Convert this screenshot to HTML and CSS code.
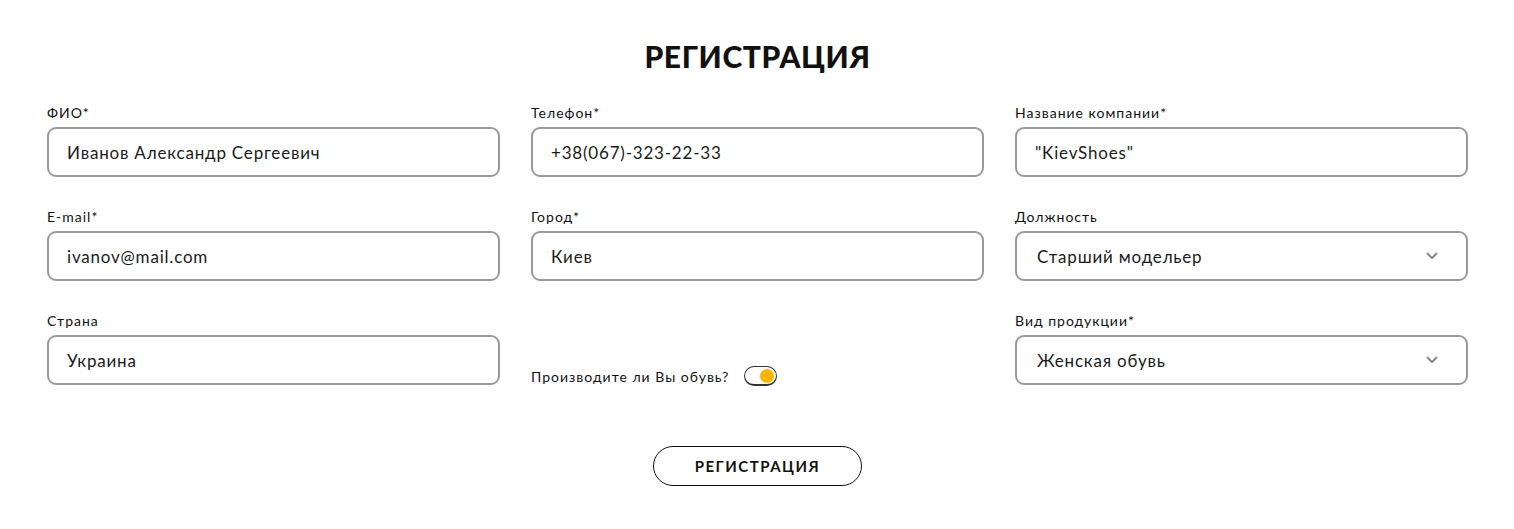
FILE: index.html
```html
<!DOCTYPE html>
<html lang="ru">

<head>
  <meta charset="UTF-8">
  <meta name="viewport" content="width=device-width, initial-scale=1.0">
  <title>Регистрация</title>

  <link rel="stylesheet" href="styles.css">

</head>

<body>

  <section class="reg">
    <h1 class="reg-title">РЕГИСТРАЦИЯ</h1>

    <form class="reg-form">
      <div class="field">
        <label>ФИО*</label>
        <div class="box">Иванов Александр Сергеевич</div>
      </div>
      <div class="field">
        <label>Телефон*</label>
        <div class="box">+38(067)-323-22-33</div>
      </div>
      <div class="field">
        <label>Название компании*</label>
        <div class="box">"KievShoes"</div>
      </div>

      <div class="field">
        <label>E-mail*</label>
        <div class="box">ivanov@mail.com</div>
      </div>
      <div class="field">
        <label>Город*</label>
        <div class="box">Киев</div>
      </div>
      <div class="field">
        <label>Должность</label>
        <div class="box select">
          <span>Старший модельер</span>
          <svg class="chev" width="12" height="8" viewBox="0 0 12 8"><path d="M1.5 1.5 L6 6 L10.5 1.5" fill="none" stroke="#8a8a8a" stroke-width="2" stroke-linecap="round" stroke-linejoin="round"/></svg>
        </div>
      </div>

      <div class="field">
        <label>Страна</label>
        <div class="box">Украина</div>
      </div>
      <div class="field check">
        <span>Производите ли Вы обувь?</span>
        <span class="toggle"><span class="knob"></span></span>
      </div>
      <div class="field">
        <label>Вид продукции*</label>
        <div class="box select">
          <span>Женская обувь</span>
          <svg class="chev" width="12" height="8" viewBox="0 0 12 8"><path d="M1.5 1.5 L6 6 L10.5 1.5" fill="none" stroke="#8a8a8a" stroke-width="2" stroke-linecap="round" stroke-linejoin="round"/></svg>
        </div>
      </div>
    </form>

    <div class="center">
      <button class="btn">РЕГИСТРАЦИЯ</button>
    </div>
  </section>

</body>

</html>
```

FILE: styles.css
```css
body {
  margin: 0;
  background: #fff;
  color: #111;
  font-family: "Lato", "Noto Sans", sans-serif;
  font-weight: 400;
}

.reg {
  padding: 37px 46px 0 47px;
}

.reg-title {
  margin: 0 0 30px;
  text-align: center;
  font-size: 30px;
  font-weight: 900;
  letter-spacing: 0.6px;
  line-height: 38px;
}

.reg-form {
  display: grid;
  grid-template-columns: repeat(3, 1fr);
  column-gap: 31px;
  row-gap: 32px;
}

.field {
  display: flex;
  flex-direction: column;
}

.field label {
  font-size: 14px;
  font-weight: 400;
  letter-spacing: 1px;
  line-height: 16px;
  margin-bottom: 6px;
}

.box {
  height: 50px;
  box-sizing: border-box;
  border: 2px solid #9a9a9a;
  border-radius: 9px;
  padding: 0 18px;
  display: flex;
  align-items: center;
  font-size: 17px;
  font-weight: 400;
  color: #1a1a1a;
  letter-spacing: 0.8px;
}

.select {
  justify-content: space-between;
  padding-left: 20px;
  padding-right: 28px;
}

.check {
  flex-direction: row;
  align-items: center;
  align-self: end;
  gap: 15px;
  font-size: 14px;
  letter-spacing: 1px;
  margin-bottom: -1px;
}

.toggle {
  width: 33px;
  height: 20px;
  box-sizing: border-box;
  border: 1px solid #333;
  border-bottom-width: 2px;
  border-radius: 10px;
  display: flex;
  align-items: center;
  justify-content: flex-end;
  padding-right: 2px;
}

.knob {
  width: 14px;
  height: 14px;
  border-radius: 50%;
  background: #ffb400;
}

.center {
  text-align: center;
  margin-top: 61px;
}

.btn {
  width: 209px;
  height: 40px;
  border: 1px solid #111;
  border-radius: 20px;
  background: #fff;
  font-family: inherit;
  font-size: 15px;
  font-weight: 700;
  letter-spacing: 1.5px;
  color: #111;
}
```
